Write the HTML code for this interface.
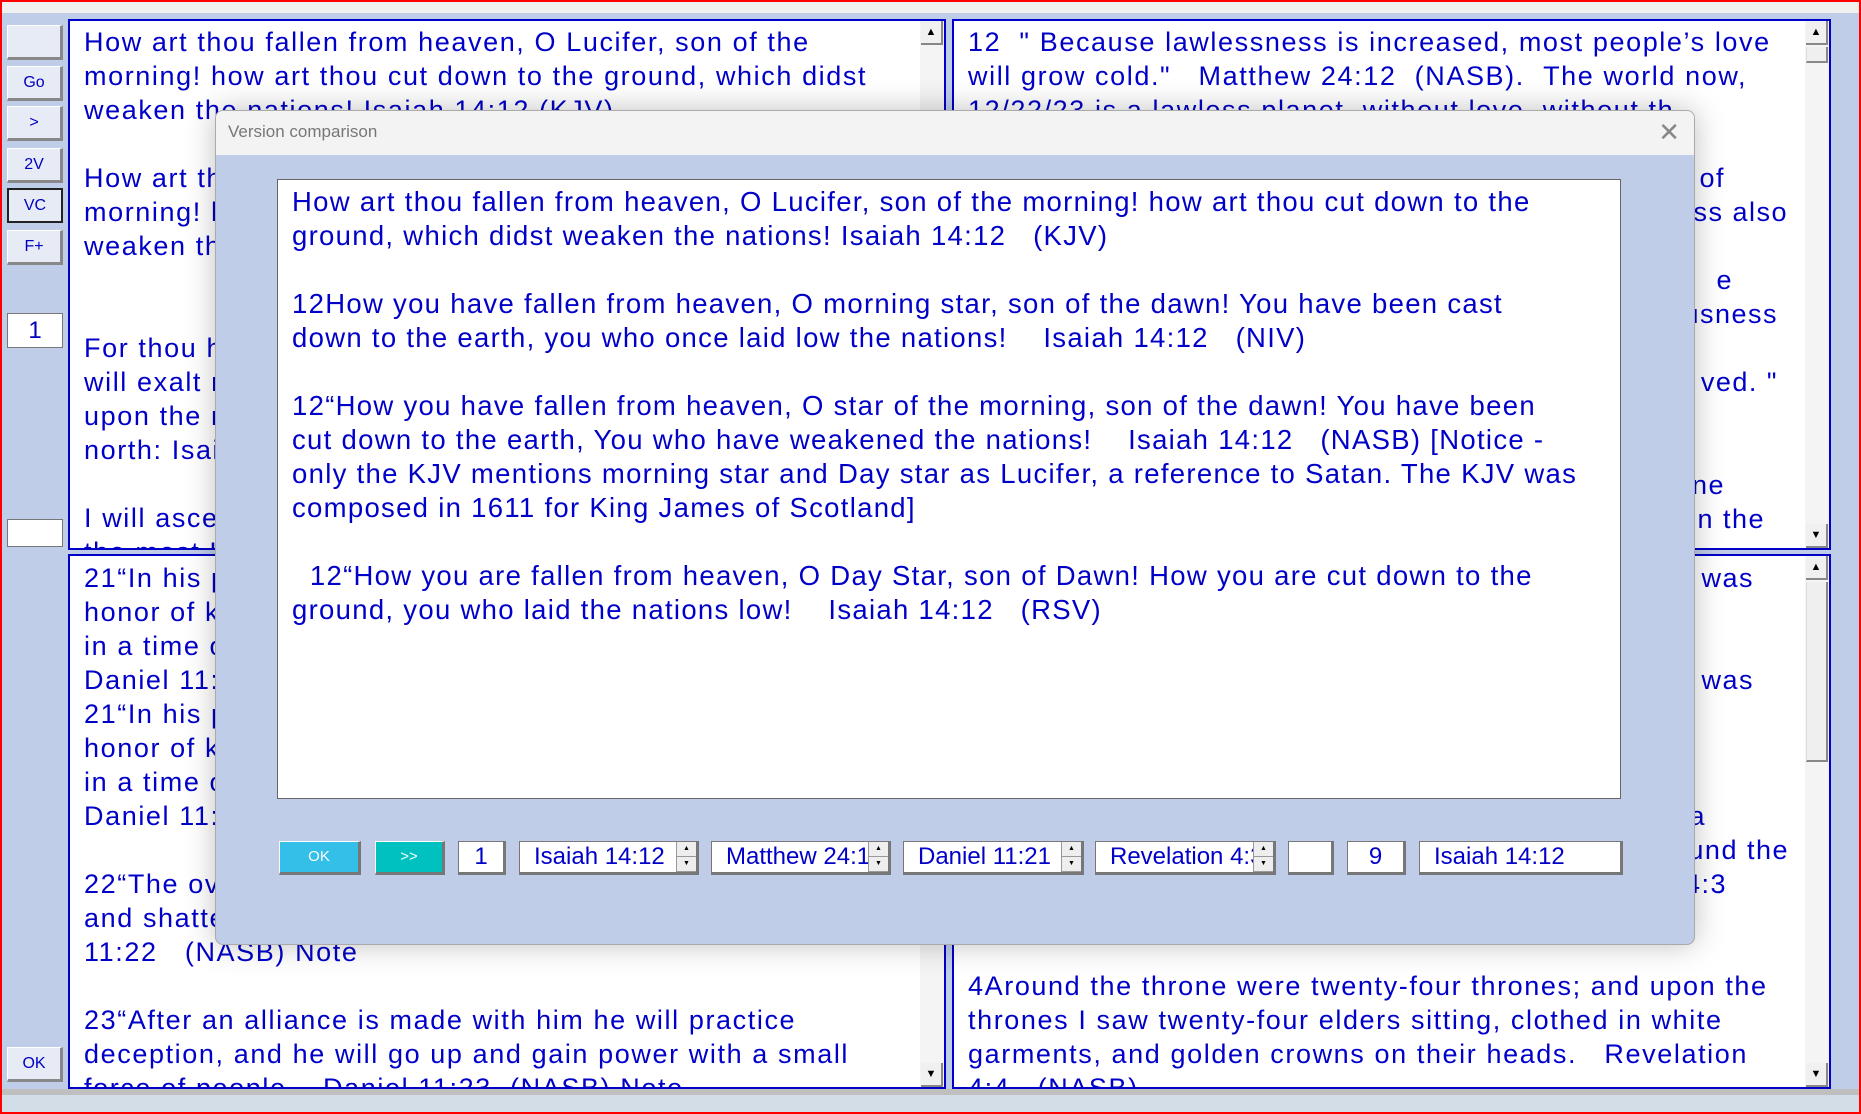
<!DOCTYPE html>
<html><head><meta charset="utf-8"><style>
*{box-sizing:border-box;margin:0;padding:0}
body{width:1861px;height:1114px;overflow:hidden;background:#c0cde8;position:relative;font-family:"Liberation Sans",sans-serif}
.frame{position:absolute;inset:0;border:2px solid #f00;pointer-events:none;z-index:50}
.topbar{position:absolute;left:0;top:0;width:1861px;height:13px;background:#f0f0f0}
.bottombar{position:absolute;left:0;top:1089px;width:1861px;height:25px;background:#d3dde8;border-top:6px solid #bfbfbf}
.btn{position:absolute;left:7px;width:56px;height:35px;background:#e6ebf5;border:1px solid #fff;border-right:3px solid #888;border-bottom:3px solid #888;color:#0000c0;font-size:16px;text-align:center;line-height:31px}
.inp{position:absolute;left:7px;width:56px;background:#fff;border:1px solid #777;color:#0000c0;text-align:center}
.panel{position:absolute;background:#fff;border:2px solid #0000c8;overflow:hidden;color:#0000c8;font-size:27px;line-height:34px;padding-left:14px;white-space:nowrap;letter-spacing:1.6px}
.sb{position:absolute;right:0;top:0;width:24px;height:100%;background:#f4f4f4;letter-spacing:0}
.arr{position:absolute;left:1px;width:22px;height:24px;background:#f0f0f0;border-right:2px solid #888;border-bottom:2px solid #888;font-size:11px;text-align:center;line-height:22px;color:#000}
.thumb{position:absolute;left:1px;width:22px;background:#efefef;border-right:2px solid #888;border-bottom:2px solid #888;border-left:1px solid #ddd}
.frag{position:absolute;color:#0000c8;font-size:27px;line-height:34px;white-space:nowrap;text-align:right;letter-spacing:1.5px}
.dlg{position:absolute;left:215px;top:110px;width:1480px;height:835px;background:#c0cde8;border:1px solid #aaa;border-radius:8px;box-shadow:0 0 30px rgba(0,0,0,.25);overflow:hidden;z-index:10}
.title{height:44px;background:#f3f3f3;color:#777;font-size:17px;line-height:42px;padding-left:12px;position:relative}
.x{position:absolute;right:14px;top:0;font-size:26px;color:#888;font-weight:300}
.box{position:absolute;left:61px;top:68px;width:1344px;height:620px;background:#fff;border:1px solid #666;color:#0000c8;font-size:27.5px;line-height:34px;padding:5px 14px;white-space:nowrap;letter-spacing:1.3px;overflow:hidden}
.ctl{position:absolute;top:730px;height:34px;background:#fff;border:1px solid #777;border-right:3px solid #777;border-bottom:3px solid #777;color:#0000c8;font-size:24px;line-height:30px;white-space:nowrap;overflow:hidden}
.spin{position:absolute;right:0;top:0;width:20px;height:100%;background:#eee;border-left:1px solid #999}
.spin div{height:50%;font-size:7px;text-align:center;line-height:14px;border-bottom:1px solid #999;color:#000}
</style></head><body>
<div class="topbar"></div>
<div class="btn" style="top:25px"></div>
<div class="btn" style="top:66px">Go</div>
<div class="btn" style="top:106px">&gt;</div>
<div class="btn" style="top:148px">2V</div>
<div class="btn" style="top:188px;border:2px solid #222">VC</div>
<div class="btn" style="top:230px">F+</div>
<div class="inp" style="top:313px;height:35px;font-size:24px;line-height:33px">1</div>
<div class="inp" style="top:519px;height:28px"></div>
<div class="btn" style="top:1047px">OK</div>

<div class="panel" style="left:68px;top:19px;width:878px;height:531px;padding-top:4px">
How art thou fallen from heaven, O Lucifer, son of the<br>morning! how art thou cut down to the ground, which didst<br>weaken the nations! Isaiah 14:12 (KJV)<br><br>How art thou fallen from heaven<br>morning! how art thou<br>weaken the nations<br><br><br>For thou hast said<br>will exalt my throne<br>upon the mount<br>north: Isaiah<br><br>I will ascend<br>the most High
<div class="sb"><div class="arr" style="top:0">▲</div></div></div>

<div class="panel" style="left:952px;top:19px;width:879px;height:531px;padding-top:4px">
12 &nbsp;" Because lawlessness is increased, most people’s love<br>will grow cold." &nbsp; Matthew 24:12 &nbsp;(NASB). &nbsp;The world now,<br>12/22/23 is a lawless planet, without love, without th
<div class="sb"><div class="arr" style="top:0">▲</div><div class="thumb" style="top:26px;height:16px"></div><div class="arr" style="bottom:0">▼</div></div></div>
<div class="frag" style="right:136px;top:161px">of</div>
<div class="frag" style="right:73px;top:195px">ess also</div>
<div class="frag" style="right:128px;top:263px">e</div>
<div class="frag" style="right:83px;top:297px">usness</div>
<div class="frag" style="right:83px;top:365px">ved. "</div>
<div class="frag" style="right:136px;top:468px">ne</div>
<div class="frag" style="right:96px;top:502px">n the</div>

<div class="panel" style="left:68px;top:554px;width:878px;height:535px;padding-top:5px">
21“In his place a despicable<br>honor of kingship<br>in a time of<br>Daniel 11:21<br>21“In his place<br>honor of kingship<br>in a time of<br>Daniel 11:21<br><br>22“The overflowing<br>and shattered<br>11:22 &nbsp; (NASB) Note<br><br>23“After an alliance is made with him he will practice<br>deception, and he will go up and gain power with a small<br>force of people. &nbsp; Daniel 11:23 &nbsp;(NASB) Note
<div class="sb"><div class="arr" style="bottom:0">▼</div></div></div>

<div class="panel" style="left:952px;top:554px;width:879px;height:535px;padding-top:5px">
<div style="position:absolute;left:14px;top:413px">4Around the throne were twenty-four thrones; and upon the<br>thrones I saw twenty-four elders sitting, clothed in white<br>garments, and golden crowns on their heads. &nbsp; Revelation<br>4:4 &nbsp; (NASB)</div>
<div class="sb"><div class="arr" style="top:0">▲</div><div class="thumb" style="top:26px;height:180px"></div><div class="arr" style="bottom:0">▼</div></div></div>
<div class="frag" style="right:107px;top:561px">was</div>
<div class="frag" style="right:107px;top:663px">was</div>
<div class="frag" style="right:155px;top:799px">a</div>
<div class="frag" style="right:72px;top:833px">und the</div>
<div class="frag" style="right:134px;top:867px">4:3</div>

<div class="dlg">
<div class="title">Version comparison<span class="x">✕</span></div>
<div class="box">How art thou fallen from heaven, O Lucifer, son of the morning! how art thou cut down to the<br>ground, which didst weaken the nations! Isaiah 14:12 &nbsp; (KJV)<br><br>12How you have fallen from heaven, O morning star, son of the dawn! You have been cast<br>down to the earth, you who once laid low the nations! &nbsp; &nbsp;Isaiah 14:12 &nbsp; (NIV)<br><br>12“How you have fallen from heaven, O star of the morning, son of the dawn! You have been<br>cut down to the earth, You who have weakened the nations! &nbsp; &nbsp;Isaiah 14:12 &nbsp; (NASB) [Notice -<br>only the KJV mentions morning star and Day star as Lucifer, a reference to Satan. The KJV was<br>composed in 1611 for King James of Scotland]<br><br>&nbsp; 12“How you are fallen from heaven, O Day Star, son of Dawn! How you are cut down to the<br>ground, you who laid the nations low! &nbsp; &nbsp;Isaiah 14:12 &nbsp; (RSV)</div>
<div class="ctl" style="left:63px;width:82px;background:#33bfe8;border-color:#fff #777 #777 #fff;border-width:1px 3px 3px 1px;color:#fff;font-size:15px;text-align:center">OK</div>
<div class="ctl" style="left:159px;width:70px;background:#00c0c0;border-color:#fff #777 #777 #fff;border-width:1px 3px 3px 1px;color:#fff;font-size:15px;text-align:center">&gt;&gt;</div>
<div class="ctl" style="left:242px;width:48px;text-align:center">1</div>
<div class="ctl" style="left:303px;width:180px;padding-left:14px">Isaiah 14:12<div class="spin"><div>▲</div><div>▼</div></div></div>
<div class="ctl" style="left:495px;width:180px;padding-left:14px">Matthew 24:12<div class="spin"><div>▲</div><div>▼</div></div></div>
<div class="ctl" style="left:687px;width:181px;padding-left:14px">Daniel 11:21<div class="spin"><div>▲</div><div>▼</div></div></div>
<div class="ctl" style="left:879px;width:181px;padding-left:14px">Revelation 4:3<div class="spin"><div>▲</div><div>▼</div></div></div>
<div class="ctl" style="left:1072px;width:46px"></div>
<div class="ctl" style="left:1131px;width:59px;text-align:center">9</div>
<div class="ctl" style="left:1203px;width:204px;padding-left:14px">Isaiah 14:12</div>
</div>
<div class="bottombar"></div>
<div class="frame"></div>
</body></html>
